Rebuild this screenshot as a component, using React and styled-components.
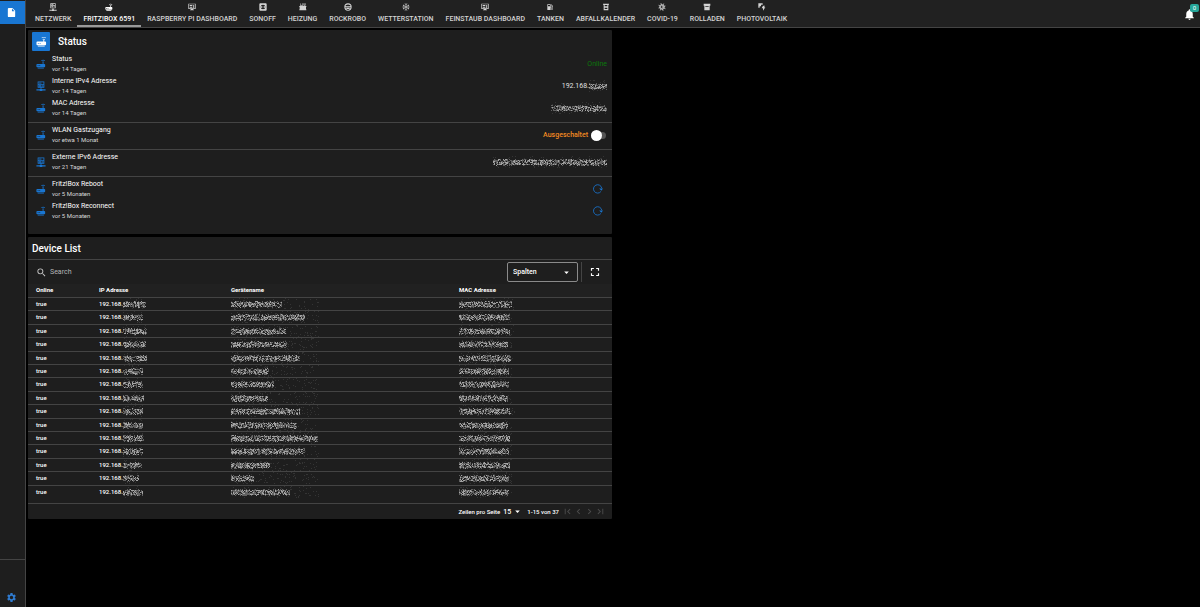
import React from "react"
import styled, { createGlobalStyle } from "styled-components"
import {
  MdArrowDropDown,
  MdChevronLeft,
  MdChevronRight,
  MdFirstPage,
  MdFullscreen,
  MdInsertDriveFile,
  MdLastPage,
  MdLocalGasStation,
  MdNotifications,
  MdSearch,
  MdSettings,
} from "react-icons/md"

const blue = "#1976d2"
const line = "#444444"

const GlobalStyle = createGlobalStyle`
  * {
    box-sizing: border-box;
  }
  body {
    margin: 0;
    background-color: #000;
    color: #fff;
    font-family: Roboto, "Liberation Sans", sans-serif;
    font-size: 7px;
  }
  button, input, select {
    font: inherit;
    color: inherit;
    background: none;
    border: 0;
    padding: 0;
    margin: 0;
  }
  button {
    cursor: pointer;
  }
  svg {
    display: block;
    flex-shrink: 0;
  }
`

const Page = styled.div`
  display: flex;
  min-height: 100vh;
`
const Sidebar = styled.aside`
  display: flex;
  flex-direction: column;
  justify-content: space-between;
  width: 26px;
  flex-shrink: 0;
  padding-top: 1px;
  background-color: #1e1e1e;
  border-right: 1px solid ${line};
`
const SideButton = styled.button`
  display: flex;
  align-items: center;
  justify-content: center;
  width: 100%;
  height: ${({ $active }) => ($active ? 23 : 20)}px;
  padding-right: 2px;
  color: ${({ $active }) => ($active ? "#fff" : "#2f7bd0")};
  background-color: ${({ $active }) => ($active ? blue : "transparent")};
`
const SideFooter = styled.div`
  display: flex;
  align-items: flex-end;
  height: 48px;
  border-top: 1px solid ${line};
`
const Main = styled.div`
  flex: 1;
  min-width: 0;
`
const TopBar = styled.header`
  display: flex;
  justify-content: space-between;
  height: 28px;
  background-color: #212121;
  border-bottom: 1px solid ${line};
`
const Tabs = styled.nav`
  display: flex;
  padding-left: 3px;
`
const Tab = styled.button`
  display: flex;
  flex-direction: column;
  align-items: center;
  gap: 4px;
  padding: 3px 6px 0;
  font-weight: 500;
  line-height: 8px;
  text-transform: uppercase;
  white-space: nowrap;
  color: ${({ $active }) => ($active ? "#fff" : "#d4d4d4")};
  border-bottom: 2px solid ${({ $active }) => ($active ? "#9a9a9a" : "transparent")};
`
const Bell = styled.button`
  position: relative;
  display: flex;
  align-items: center;
  padding: 2px 4px 0 0;
`
const Badge = styled.span`
  position: absolute;
  top: 4px;
  right: 1px;
  width: 9px;
  height: 8px;
  border-radius: 2px;
  background-color: #26a69a;
  font-size: 6px;
  line-height: 8px;
  text-align: center;
`
const Board = styled.main`
  display: grid;
  grid-template-columns: 1fr 1fr;
  gap: 2px;
  padding: 2px;
`
const Column = styled.div`
  display: flex;
  flex-direction: column;
  gap: 3px;
`
const Card = styled.section`
  background-color: #1e1e1e;
  border-radius: 1px;
  padding-bottom: ${({ $bottom }) => $bottom || 0}px;
`
const CardHeader = styled.div`
  display: flex;
  align-items: center;
  gap: 8px;
  height: 23px;
  padding: 0 4px;
  border-bottom: ${({ $divided }) => ($divided ? `1px solid ${line}` : "0")};
`
const CardTitle = styled.h2`
  margin: 0;
  font-size: 10px;
  font-weight: 500;
`
const Avatar = styled.span`
  display: flex;
  align-items: center;
  justify-content: center;
  width: 18px;
  height: 19px;
  border-radius: 1px;
  background-color: ${blue};
`
const Divider = styled.hr`
  height: 1px;
  margin: 3px 0 1px;
  border: 0;
  background-color: ${line};
`
const Row = styled.div`
  display: flex;
  align-items: center;
  height: 22px;
  padding: 0 5px 0 8px;
  color: ${blue};
`
const RowText = styled.div`
  flex: 1;
  padding: 0 0 1px 6px;
  line-height: 9px;
  color: #fff;
`
const Primary = styled.div`
  font-weight: 400;
`
const Secondary = styled.div`
  font-size: 6px;
  color: #d8d8d8;
`
const Value = styled.div`
  display: flex;
  align-items: center;
  color: ${({ $color }) => $color || "#e0e0e0"};
`
const SwitchLabel = styled.label`
  display: flex;
  align-items: center;
  gap: 3px;
  font-weight: 500;
  color: #f28a22;
`
const Switch = styled.input`
  appearance: none;
  display: flex;
  align-items: center;
  width: 15px;
  height: 7px;
  margin: 0 1px 0 0;
  border-radius: 4px;
  background-color: #555;

  &::before {
    content: "";
    width: 11px;
    height: 11px;
    flex-shrink: 0;
    border-radius: 50%;
    background-color: #fff;
  }
`
const IconButton = styled.button`
  display: flex;
  margin-right: ${({ $right }) => $right || 0}px;
  color: ${({ $muted }) => ($muted ? "#4c4c4c" : "inherit")};
`
const Toolbar = styled.div`
  display: flex;
  align-items: center;
  height: 24px;
  padding: 0 10px 0 8px;
`
const SearchLabel = styled.label`
  display: flex;
  align-items: center;
  gap: 3px;
  flex: 1;
`
const SearchInput = styled.input`
  flex: 1;
  outline: 0;

  &::placeholder {
    color: #b5b5b5;
  }
`
const SelectBox = styled.div`
  display: flex;
  align-items: center;
  width: ${({ $width }) => $width}px;
  height: ${({ $outlined }) => ($outlined ? 20 : 12)}px;
  padding-right: ${({ $outlined }) => ($outlined ? 5 : 0)}px;
  border: ${({ $outlined }) => ($outlined ? "1px solid #8a8a8a" : "0")};
  border-radius: 2px;
`
const Select = styled.select`
  appearance: none;
  flex: 1;
  min-width: 0;
  height: 100%;
  padding-left: ${({ $left }) => $left || 0}px;
  font-size: 7px;
  font-weight: 500;
`
const Separator = styled.span`
  width: 1px;
  height: 20px;
  margin: 0 6px 0 3px;
  background-color: ${line};
`
const Table = styled.table`
  width: 100%;
  table-layout: fixed;
  border-collapse: collapse;
  font-size: 6px;
  line-height: 8px;
`
const Th = styled.th`
  width: ${({ $width }) => ($width ? `${$width}px` : "auto")};
  height: 13px;
  padding: 0 0 0 8px;
  text-align: left;
  font-weight: 700;
  background-color: #212121;
  border-bottom: 1px solid ${line};
`
const Tr = styled.tr`
  height: 13px;
  border-bottom: 1px solid ${line};

  &:nth-child(5n + 2),
  &:nth-child(5n + 4) {
    height: 14px;
  }
  &:last-child {
    border-bottom: 0;
  }
`
const Td = styled.td`
  padding: 0 0 0 8px;
  font-weight: 500;
`
const Cell = styled.div`
  display: flex;
  align-items: center;
  height: 12px;
`
const Footer = styled.div`
  display: flex;
  align-items: center;
  justify-content: flex-end;
  height: 16px;
  margin-top: 5px;
  padding-right: 6px;
  border-top: 1px solid ${line};
  font-size: 6px;
  font-weight: 500;
`
const PageSize = styled.label`
  display: flex;
  align-items: center;
  gap: 3px;
`
const Range = styled.span`
  margin: 0 3px 0 4px;
`

const Icon = ({ size = 8, children }) => (
  <svg width={size} height={size} viewBox="0 0 24 24" fill="currentColor" aria-hidden="true">
    {children}
  </svg>
)

const RouterIcon = ({ size }) => (
  <Icon size={size}>
    <path
      fillRule="evenodd"
      d="M16 8h2v4h2a2 2 0 0 1 2 2v4a2 2 0 0 1-2 2H3a2 2 0 0 1-2-2v-4a2 2 0 0 1 2-2h13zM4 15v2h2v-2zm4 0v2h2v-2zM4 21h15v2H4z"
    />
    <path d="M12 4q5-4 10 0l-1 1q-4-3-8 0zM14 7q3-2 6 0l-1 1q-2-1-4 0z" />
  </Icon>
)

const ServerIcon = ({ size }) => (
  <Icon size={size}>
    <path
      fillRule="evenodd"
      d="M4 1h16v15h-7v3h2v1h8v3h-8v1H9v-1H1v-3h8v-1h2v-3H4zM6 3v4h12V3zm0 6v5h12V9zM7 4h6v2H7zm0 6h6v3H7zm8 0h2v3h-2z"
    />
  </Icon>
)

const DashboardIcon = () => (
  <Icon>
    <path fillRule="evenodd" d="M1 2h22v16h-7v2h2v2H6v-2h2v-2H1zm2 2v12h18V4zM5 6h8v3H5zm0 5h8v3H5zm10-5h4v2h-4zm0 4h4v4h-4z" />
  </Icon>
)

const SocketIcon = () => (
  <Icon>
    <path fillRule="evenodd" d="M4 1h16a3 3 0 0 1 3 3v16a3 3 0 0 1-3 3H4a3 3 0 0 1-3-3V4a3 3 0 0 1 3-3zm8 4a7 7 0 1 0 0 14 7 7 0 0 0 0-14zM6 10h4v4H6zm8 0h4v4h-4z" />
  </Icon>
)

const RadiatorIcon = () => (
  <Icon>
    <path d="M5 1q3 2 1 5h2v3h2V6q2-3 0-5h3q2 2 0 5v3h3V6q2-3 0-5h3q2 2 0 5v3h3v3h-1v7h1v3H1v-3h1v-7H1V9h3V6q2-3 0-5z" />
  </Icon>
)

const VacuumIcon = () => (
  <Icon>
    <path fillRule="evenodd" d="M12 1a11 11 0 1 1 0 22 11 11 0 0 1 0-22zM5 7v3h14V7q-7-5-14 0zm-1 6q1 8 8 8t8-8zm3 1h10v4H7z" />
  </Icon>
)

const WeatherIcon = () => (
  <Icon>
    <path
      fill="none"
      stroke="currentColor"
      strokeWidth="2"
      d="M12 1v22M3 7l18 10M21 7 3 17M9 2l3 3 3-3M9 22l3-3 3 3M2 10l4-1-1-4M22 14l-4 1 1 4M22 10l-4-1 1-4M2 14l4 1-1 4"
    />
  </Icon>
)

const TrashIcon = () => (
  <Icon>
    <path fillRule="evenodd" d="M3 2h18v3h-2v17H5V5H3zm5 4v3h8V6zm0 5v2h8v-2zm0 4v3h8v-3z" />
  </Icon>
)

const VirusIcon = () => (
  <Icon>
    <circle cx="12" cy="12" r="6" fill="none" stroke="currentColor" strokeWidth="3" />
    <path
      fill="none"
      stroke="currentColor"
      strokeWidth="3"
      d="M9 1l1 5M17 2l-3 5M22 9l-5 1M22 17l-5-3M15 23l-1-5M7 22l3-5M2 15l5-1M2 7l5 3"
    />
    <circle cx="13" cy="12" r="2" />
  </Icon>
)

const ShutterIcon = () => (
  <Icon>
    <path fillRule="evenodd" d="M2 2h20v6h-2v14H4V8H2zm5 8v2h10v-2z" />
  </Icon>
)

const SolarIcon = () => (
  <Icon>
    <path d="M1 1h13v4H9v5H5v4H1zM15 8l-4 8h4v7l7-10h-4l3-5z" />
  </Icon>
)

const ReloadIcon = () => (
  <Icon size={10}>
    <path fill="none" stroke="currentColor" strokeWidth="2" d="M19 18a10 10 0 1 1 2-8" />
    <path d="M15 11h9l-4 5z" />
  </Icon>
)

// small deterministic generator, keeps the scrambled patterns stable between renders
const random = (seed) => {
  let n = seed * 7919 + 17
  return () => {
    n = (n * 16807) % 2147483647
    return n / 2147483647
  }
}

const Scrambled = ({ width, seed, spread = 0 }) => {
  const next = random(seed)
  let bright = ""
  let dim = ""
  for (let x = 0; x < width; x++) {
    for (let y = 3; y < 10; y++) {
      const edge = y < 4 || y > 8
      const value = next()
      if (value < (edge ? 0.05 : 0.28)) bright += `M${x} ${y}h1v1h-1z`
      else if (value < (edge ? 0.3 : 0.75)) dim += `M${x} ${y}h1v1h-1z`
    }
  }
  let dust = ""
  const total = width + spread
  for (let i = 0; i < total; i++) {
    dust += `M${Math.floor(next() * total)} ${Math.floor(next() * 12)}h1v1h-1z`
  }
  return (
    <svg width={total} height="12" shapeRendering="crispEdges" role="img" aria-label="unkenntlich">
      <path d={dust} fill="#343434" />
      <path d={dim} fill="#626262" />
      <path d={bright} fill="#a4a4a4" />
    </svg>
  )
}

const tabs = [
  ["Netzwerk", <ServerIcon />],
  ["Fritz!Box 6591", <RouterIcon />],
  ["Raspberry Pi Dashboard", <DashboardIcon />],
  ["Sonoff", <SocketIcon />],
  ["Heizung", <RadiatorIcon />],
  ["Rockrobo", <VacuumIcon />],
  ["Wetterstation", <WeatherIcon />],
  ["Feinstaub Dashboard", <DashboardIcon />],
  ["Tanken", <MdLocalGasStation size={8} />],
  ["Abfallkalender", <TrashIcon />],
  ["Covid-19", <VirusIcon />],
  ["Rolladen", <ShutterIcon />],
  ["Photovoltaik", <SolarIcon />],
]

// widths of the masked parts: ip, name, mac
const devices = [
  [23, 51, 53],
  [20, 74, 51],
  [24, 55, 51],
  [23, 56, 49],
  [24, 69, 52],
  [20, 38, 50],
  [20, 43, 50],
  [21, 37, 49],
  [20, 69, 52],
  [20, 66, 49],
  [21, 87, 51],
  [20, 74, 50],
  [19, 39, 51],
  [16, 23, 50],
  [20, 59, 50],
]

const StatusRow = ({ icon: RowIcon = RouterIcon, title, time, children }) => (
  <Row>
    <RowIcon size={10} />
    <RowText>
      <Primary>{title}</Primary>
      <Secondary>{time}</Secondary>
    </RowText>
    {children}
  </Row>
)

const StatusCard = () => (
  <Card $bottom={12}>
    <CardHeader>
      <Avatar>
        <RouterIcon size={11} />
      </Avatar>
      <CardTitle>Status</CardTitle>
    </CardHeader>
    <StatusRow title="Status" time="vor 14 Tagen">
      <Value $color="#0b7a0b">Online</Value>
    </StatusRow>
    <StatusRow icon={ServerIcon} title="Interne IPv4 Adresse" time="vor 14 Tagen">
      <Value>
        192.168.
        <Scrambled width={18} seed={3} />
      </Value>
    </StatusRow>
    <StatusRow title="MAC Adresse" time="vor 14 Tagen">
      <Value>
        <Scrambled width={56} seed={4} />
      </Value>
    </StatusRow>
    <Divider />
    <StatusRow title="WLAN Gastzugang" time="vor etwa 1 Monat">
      <SwitchLabel>
        Ausgeschaltet
        <Switch type="checkbox" role="switch" />
      </SwitchLabel>
    </StatusRow>
    <Divider />
    <StatusRow icon={ServerIcon} title="Externe IPv6 Adresse" time="vor 21 Tagen">
      <Value>
        <Scrambled width={114} seed={5} />
      </Value>
    </StatusRow>
    <Divider />
    <StatusRow title="Fritz!Box Reboot" time="vor 5 Monaten">
      <IconButton $right={4} aria-label="Reboot">
        <ReloadIcon />
      </IconButton>
    </StatusRow>
    <StatusRow title="Fritz!Box Reconnect" time="vor 5 Monaten">
      <IconButton $right={4} aria-label="Reconnect">
        <ReloadIcon />
      </IconButton>
    </StatusRow>
  </Card>
)

const DeviceCard = () => (
  <Card>
    <CardHeader $divided>
      <CardTitle>Device List</CardTitle>
    </CardHeader>
    <Toolbar>
      <SearchLabel>
        <MdSearch size={11} color="#c8c8c8" />
        <SearchInput type="text" placeholder="Search" aria-label="Search" />
      </SearchLabel>
      <SelectBox $width={71} $outlined>
        <Select $left={5} aria-label="Spalten">
          <option>Spalten</option>
        </Select>
        <MdArrowDropDown size={11} />
      </SelectBox>
      <Separator />
      <IconButton aria-label="Vollbild">
        <MdFullscreen size={14} />
      </IconButton>
    </Toolbar>
    <Table>
      <thead>
        <tr>
          <Th $width={63}>Online</Th>
          <Th $width={132}>IP Adresse</Th>
          <Th $width={228}>Gerätename</Th>
          <Th>MAC Adresse</Th>
        </tr>
      </thead>
      <tbody>
        {devices.map(([ip, name, mac], index) => (
          <Tr key={index}>
            <Td>true</Td>
            <Td>
              <Cell>
                192.168.
                <Scrambled width={ip} seed={index + 10} />
              </Cell>
            </Td>
            <Td>
              <Cell>
                <Scrambled width={name} seed={index + 40} spread={88 - name} />
              </Cell>
            </Td>
            <Td>
              <Cell>
                <Scrambled width={mac} seed={index + 70} spread={4} />
              </Cell>
            </Td>
          </Tr>
        ))}
      </tbody>
    </Table>
    <Footer>
      <PageSize>
        Zeilen pro Seite
        <SelectBox $width={20}>
          <Select defaultValue="15">
            <option>15</option>
            <option>30</option>
          </Select>
          <MdArrowDropDown size={11} />
        </SelectBox>
      </PageSize>
      <Range>1-15 von 37</Range>
      <IconButton $muted aria-label="Erste Seite">
        <MdFirstPage size={11} />
      </IconButton>
      <IconButton $muted aria-label="Vorherige Seite">
        <MdChevronLeft size={11} />
      </IconButton>
      <IconButton $muted aria-label="Nächste Seite">
        <MdChevronRight size={11} />
      </IconButton>
      <IconButton $muted aria-label="Letzte Seite">
        <MdLastPage size={11} />
      </IconButton>
    </Footer>
  </Card>
)

const App = () => {
  return (
    <>
      <GlobalStyle />
      <Page>
        <Sidebar>
          <SideButton $active aria-label="Dashboard">
            <MdInsertDriveFile size={11} />
          </SideButton>
          <SideFooter>
            <SideButton aria-label="Einstellungen">
              <MdSettings size={11} />
            </SideButton>
          </SideFooter>
        </Sidebar>
        <Main>
          <TopBar>
            <Tabs>
              {tabs.map(([label, icon]) => (
                <Tab key={label} $active={label === "Fritz!Box 6591"}>
                  {icon}
                  {label}
                </Tab>
              ))}
            </Tabs>
            <Bell aria-label="Benachrichtigungen">
              <MdNotifications size={13} />
              <Badge>0</Badge>
            </Bell>
          </TopBar>
          <Board>
            <Column>
              <StatusCard />
              <DeviceCard />
            </Column>
          </Board>
        </Main>
      </Page>
    </>
  )
}

export default App
